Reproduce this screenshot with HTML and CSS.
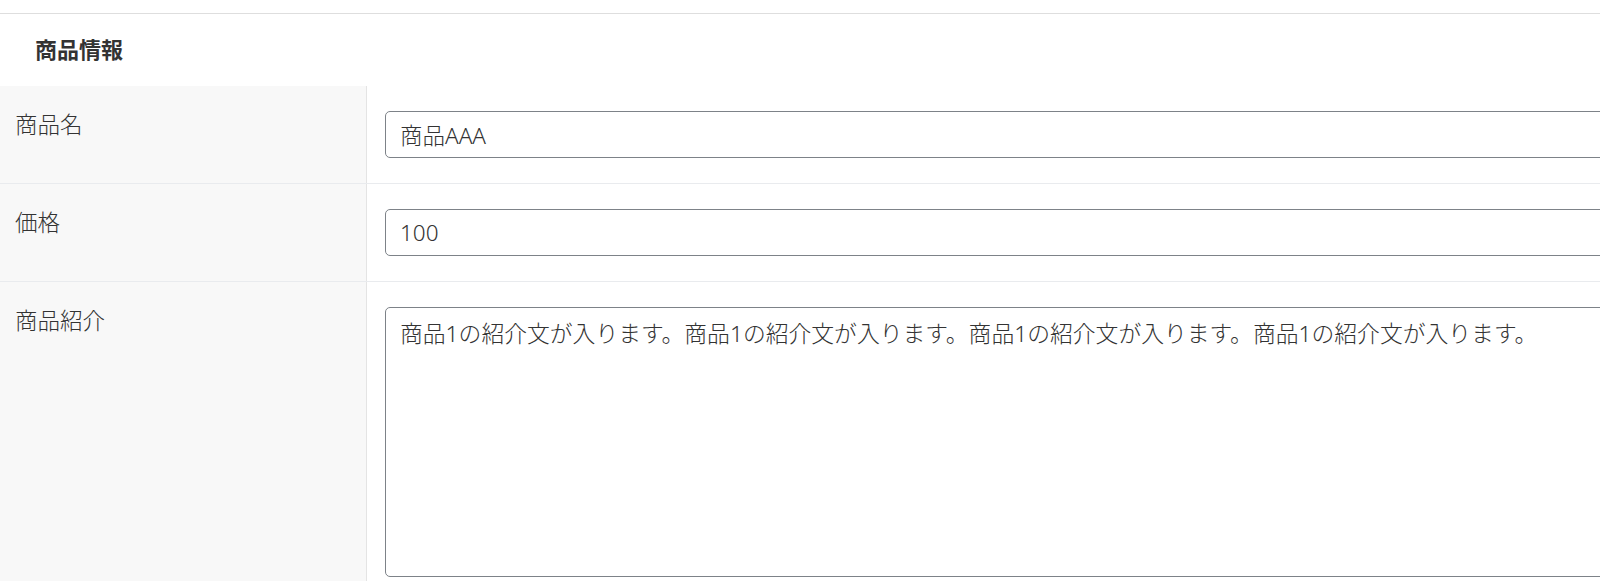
FILE: index.html
```html
<!DOCTYPE html>
<html lang="ja">
<head>
    <meta charset="UTF-8">
    <meta name="viewport" content="width=device-width, initial-scale=1.0">
    <title>商品情報</title>
    <link rel="stylesheet" href="styles.css">
</head>
<body>

<div class="page">
    <div class="card">
        <h2 class="card-title">商品情報</h2>
        <form class="item-form">
            <div class="form-row">
                <label class="form-label" for="name">商品名</label>
                <div class="form-field">
                    <input type="text" id="name" name="name" value="商品AAA">
                </div>
            </div>
            <div class="form-row">
                <label class="form-label" for="price">価格</label>
                <div class="form-field">
                    <input type="text" id="price" name="price" value="100">
                </div>
            </div>
            <div class="form-row">
                <label class="form-label" for="intro">商品紹介</label>
                <div class="form-field">
                    <textarea id="intro" name="intro">商品1の紹介文が入ります。商品1の紹介文が入ります。商品1の紹介文が入ります。商品1の紹介文が入ります。</textarea>
                </div>
            </div>
        </form>
    </div>
</div>

</body>
</html>
```

FILE: styles.css
```css
body {
    margin: 0;
    padding: 0;
    overflow: hidden;
    background-color: #fff;
    font-family: "Noto Sans", "Noto Sans CJK JP", sans-serif;
    font-size: 22.5px;
    font-weight: 300;
    color: #333;
}
.page {
    width: 1700px;
    padding-top: 13px;
}
.card {
    border-top: 1px solid #dedede;
}
.card-title {
    margin: 0;
    padding: 19px 35px 0;
    height: 53px;
    font-size: 22px;
    font-weight: bold;
    line-height: 33px;
    color: #333;
}
.form-row {
    display: grid;
    grid-template-columns: 367px 1fr;
    border-bottom: 1px solid #e9ebee;
}
.form-label {
    padding: 22px 15px 20px;
    line-height: 33px;
    background-color: #f8f8f8;
    border-right: 1px solid #e4e4e4;
}
.form-field {
    padding: 25px 0 25px 18px;
}
input[type="text"], textarea {
    display: block;
    width: 100%;
    box-sizing: border-box;
    margin: 0;
    padding: 6px 14px;
    border: 1px solid #7d8288;
    border-radius: 5px;
    font-family: inherit;
    font-size: 22.5px;
    font-weight: 300;
    color: #333;
    background-color: #fff;
}
input[type="text"] {
    height: 47px;
    line-height: 33px;
}
textarea {
    height: 270px;
    padding-top: 10px;
    font-size: 22.8px;
    line-height: 32px;
    resize: none;
}
```
